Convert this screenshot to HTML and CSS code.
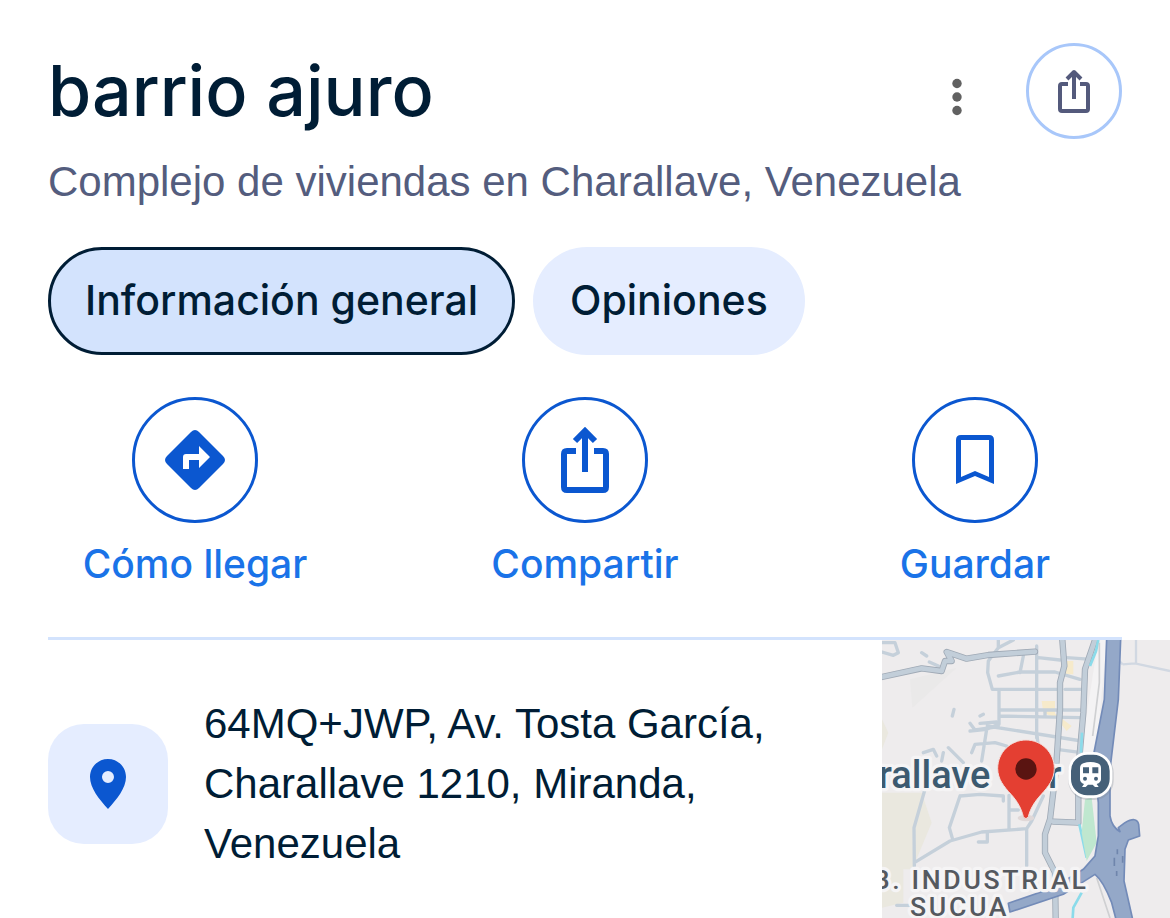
FILE: index.html
```html
<!DOCTYPE html>
<html lang="es">
<head>
    <meta charset="UTF-8">
    <meta name="viewport" content="width=device-width, initial-scale=1.0">
    <title>barrio ajuro</title>
    <link rel="stylesheet" href="styles.css">
</head>
<body>
    <header class="place-header">
        <div class="title-row">
            <h1>barrio ajuro</h1>
            <button class="more-button" aria-label="Más opciones">
                <svg width="12" height="38" viewBox="0 0 12 38" fill="#616161">
                    <circle cx="6" cy="5.500" r="4.700"/>
                    <circle cx="6" cy="19" r="4.700"/>
                    <circle cx="6" cy="32.500" r="4.700"/>
                </svg>
            </button>
            <button class="share-button" aria-label="Compartir">
                <svg width="34" height="46" viewBox="0 0 34 46" fill="none" stroke="#545a7c" stroke-width="4" stroke-linejoin="round">
                    <path d="M11 16H5Q3 16 3 18V41Q3 43 5 43H29Q31 43 31 41V18Q31 16 29 16H23"/>
                    <path d="M17 31V4M10 11L17 4L24 11"/>
                </svg>
            </button>
        </div>
        <p class="subtitle">Complejo de viviendas en Charallave, Venezuela</p>
    </header>

    <nav class="tabs">
        <button class="tab active">Información general</button>
        <button class="tab">Opiniones</button>
    </nav>

    <div class="actions">
        <button class="action">
            <span class="action-icon">
                <svg width="60" height="60" viewBox="0 0 60 60">
                    <path fill="#0b57d0" d="M26 2Q30-2 34 2L58 26Q62 30 58 34L34 58Q30 62 26 58L2 34Q-2 30 2 26Z"/>
                    <path fill="#fff" d="M18 39V27Q18 24 21 24H34V16L45 27L34 38V30H24V39Z"/>
                </svg>
            </span>
            <span>Cómo llegar</span>
        </button>
        <button class="action">
            <span class="action-icon">
                <svg width="48" height="66" viewBox="0 0 48 66" fill="none" stroke="#0b57d0" stroke-width="6">
                    <path d="M15 24H6Q3 24 3 27V60Q3 63 6 63H42Q45 63 45 60V27Q45 24 42 24H33"/>
                    <path d="M24 45V5M14 14L24 4L34 14"/>
                </svg>
            </span>
            <span>Compartir</span>
        </button>
        <button class="action">
            <span class="action-icon">
                <svg width="38" height="50" viewBox="0 0 38 50" fill="#0b57d0">
                    <path fill-rule="evenodd" d="M0 49V5Q0 0 5 0H33Q38 0 38 5V49L19 41ZM5 5V42L19 36L33 42V5Z"/>
                </svg>
            </span>
            <span>Guardar</span>
        </button>
    </div>

    <hr class="divider">

    <section class="location">
        <div class="address">
            <span class="pin-box">
                <svg width="36" height="50" viewBox="0 0 36 50" fill="#0b57d0">
                    <path fill-rule="evenodd" d="M18 0C8 0 0 8 0 18C0 29 9 40 18 50C27 40 36 29 36 18C36 8 28 0 18 0ZM18 12A6 6 0 1 1 18 24A6 6 0 1 1 18 12Z"/>
                </svg>
            </span>
            <p>64MQ+JWP, Av. Tosta García, Charallave 1210, Miranda, Venezuela</p>
        </div>
        <a class="map" href="#" aria-label="Mapa">
            <svg viewBox="6 12 864 834" preserveAspectRatio="xMinYMin slice">
                <rect x="6" y="12" width="864" height="834" fill="#eeeced"/>
                <path fill="#eae8df" d="M6 470H125L155 560L105 680V700H70V800L6 815ZM6 250L25 290L6 340Z"/>
                <path fill="#eae9e9" d="M90 130L230 95L97 215Z"/>
                <path fill="#f6eacb" d="M485 195H525V245L490 230ZM545 75H580V115H545ZM515 225L575 270L560 285L540 260Z"/>
                <path fill="#f4f3f4" d="M655 12H680L650 330L600 480L610 300Z"/>
                <!-- streets -->
                <g fill="none" stroke="#c5d0da" stroke-width="10" stroke-linejoin="round" stroke-linecap="round">
                    <path d="M6 20H45L55 50L40 58L6 48M125 50L140 60M148 78L175 90M355 12V35L325 75L323 110L337 160H470M470 30V305M355 35L400 12M430 60L420 110M355 120L420 108H525L600 130M475 65L540 72M560 65L635 70M337 160H535M357 160V265M357 222H600M357 240L600 245M495 222V240M500 160H535M555 160H605"/>
                    <path d="M322 270L605 315M270 262L285 282L355 272M300 262L350 258M222 220L217 240M300 240L310 235M270 285L320 280L305 375M320 280L355 265M130 350L160 340L170 360M205 335L250 380M190 350L185 375M275 350L285 325L345 320L380 330L400 375M470 290L480 375M530 340L605 350"/>
                    <path d="M135 460L102 575L103 690M103 680L210 615L305 588L440 578M240 480L208 575L218 610M240 480L300 475L370 480V495M387 478V578M387 522H415M440 578V690M440 578L455 555L490 480M295 618H322V590M50 808H90"/>
                </g>
                <path d="M728 85L765 82L870 105M768 12V80M728 85L718 75" fill="none" stroke="#d1d8e2" stroke-width="7"/>
                <!-- main roads -->
                <g fill="none" stroke-linejoin="round" stroke-linecap="round">
                    <path stroke="#9fa9b5" stroke-width="19" d="M6 123L125 97L185 105L195 75L215 75L200 48L260 68L325 57L465 47M547 12L553 90L540 140V220L528 400L510 550L495 595V650L525 710L527 846M645 12L615 100L610 230L595 400V560L520 557"/>
                    <path stroke="#c2ced9" stroke-width="14" d="M6 123L125 97L185 105L195 75L215 75L200 48L260 68L325 57L465 47M547 12L553 90L540 140V220L528 400L510 550L495 595V650L525 710L527 846M645 12L615 100L610 230L595 400V560L520 557"/>
                </g>
                <path fill="none" stroke="#8bdbea" stroke-width="8" d="M655 12L648 45L630 90M606 290L603 350M598 565L620 665M605 770L580 815L578 846"/>
                <path fill="#bfe7cf" d="M615 490L635 485L650 620L620 675L605 590Z"/>
                <path fill="none" stroke="#cfd0d2" stroke-width="5" d="M658 20V140L638 300M650 725L690 846"/>
                <path fill="#94a8c8" stroke="#738bb8" stroke-width="5" stroke-linejoin="round" d="M680 8H722L715 190L690 400V540Q695 572 720 587L715 575L735 560Q770 540 776 565L779 600L745 612L735 640L732 735L758 850H708L695 800Q670 735 645 715L550 775L390 828L385 802L520 755L610 700L645 660L655 600V500L640 360L673 190Z"/>
                <path fill="none" stroke="#6f85ac" stroke-width="5" d="M712 640V655M703 665V690M710 705V720M728 660V680"/>
                <g class="map-label city">
                    <text x="331" y="456" text-anchor="end">Charallave</text>
                    <text x="504" y="456">r</text>
                </g>
                <g class="map-label zone">
                    <text x="-22" y="760">B. INDUSTRIAL</text>
                    <text x="90" y="840">SUCUA</text>
                </g>
                <!-- train station -->
                <rect x="565" y="352" width="136" height="140" rx="58" fill="#7e8894" opacity=".3"/>
                <rect x="569" y="352" width="124" height="130" rx="53" fill="#456078" stroke="#fff" stroke-width="8"/>
                <path fill="#fff" fill-rule="evenodd" d="M610 382Q631 374 653 382Q663 386 663 396V430Q663 440 650 444L656 453H645L638 446H624L617 453H606L612 444Q600 440 600 430V396Q600 386 610 382ZM609 394V412H627V394ZM637 394V412H655V394Z"/>
                <circle cx="615" cy="428" r="6" fill="#456078"/>
                <circle cx="648" cy="428" r="6" fill="#456078"/>
                <!-- place marker -->
                <ellipse cx="438" cy="546" rx="25" ry="10" fill="#e0d8d8"/>
                <path fill="#e43f32" stroke="#f3dfdc" stroke-width="3" d="M438 312C391 312 353 350 353 397C353 430 372 452 393 475C414 498 424 518 430 542Q438 553 445 542C451 518 463 498 484 475C505 452 523 430 523 397C523 350 485 312 438 312Z"/>
                <circle cx="438" cy="399" r="32" fill="#5a1411"/>
            </svg>
        </a>
    </section>
</body>
</html>
```
FILE: styles.css
```css
* {
    box-sizing: border-box;
}
body {
    margin: 0;
    background-color: #fff;
    font-family: "Liberation Sans", Arial, sans-serif;
    color: #001d35;
}
button {
    margin: 0;
    padding: 0;
    border: none;
    background: none;
    font-family: Inter, Roboto, sans-serif;
    font-weight: 500;
    cursor: pointer;
}
svg {
    display: block;
}
.place-header {
    padding: 43px 48px 0;
}
.title-row {
    display: flex;
    align-items: center;
}
h1 {
    flex: 1;
    margin: 0;
    font-family: Inter, Roboto, sans-serif;
    font-size: 70px;
    font-weight: 500;
    line-height: 96px;
}
.more-button {
    padding: 12px 24px 0;
    margin-right: 39px;
}
.share-button {
    display: flex;
    align-items: center;
    justify-content: center;
    width: 96px;
    height: 96px;
    border: 3px solid #a8c7fa;
    border-radius: 50%;
}
.subtitle {
    margin: 13px 0 0;
    font-size: 42px;
    line-height: 60px;
    color: #545d7e;
}
.tabs {
    display: flex;
    gap: 18px;
    padding: 35px 48px 0;
}
.tab {
    height: 108px;
    padding: 0 34px 2px;
    border: 3px solid transparent;
    border-radius: 54px;
    background-color: #e5edff;
    font-size: 41px;
    color: #001d35;
}
.tab.active {
    background-color: #d3e3fd;
    border-color: #001d35;
}
.actions {
    display: grid;
    grid-template-columns: repeat(3, 1fr);
    padding: 42px 0 48px;
}
.action {
    display: flex;
    flex-direction: column;
    align-items: center;
    gap: 16px;
    font-size: 39px;
    line-height: 50px;
    color: #1a73e8;
}
.action-icon {
    display: flex;
    align-items: center;
    justify-content: center;
    width: 126px;
    height: 126px;
    border: 3px solid #0b57d0;
    border-radius: 50%;
}
.divider {
    height: 3px;
    margin: 0 48px;
    border: none;
    background-color: #d3e3fd;
}
.location {
    display: flex;
}
.address {
    flex: 1;
    display: flex;
    align-items: center;
    gap: 36px;
    padding: 54px 48px 44px;
}
.address p {
    flex: 1;
    margin: 0;
    font-size: 42px;
    line-height: 60px;
}
.pin-box {
    display: flex;
    align-items: center;
    justify-content: center;
    width: 120px;
    height: 120px;
    border-radius: 36px;
    background-color: #e5edff;
}
.map {
    width: 288px;
    overflow: hidden;
}
.map-label {
    font-family: Roboto, sans-serif;
    font-weight: 500;
    paint-order: stroke;
    stroke: #f5f4f5;
    stroke-width: 20px;
    stroke-linejoin: round;
}
.city {
    font-size: 114px;
    fill: #3c5a70;
}
.zone {
    font-size: 80px;
    letter-spacing: 8px;
    fill: #55595f;
}
```
